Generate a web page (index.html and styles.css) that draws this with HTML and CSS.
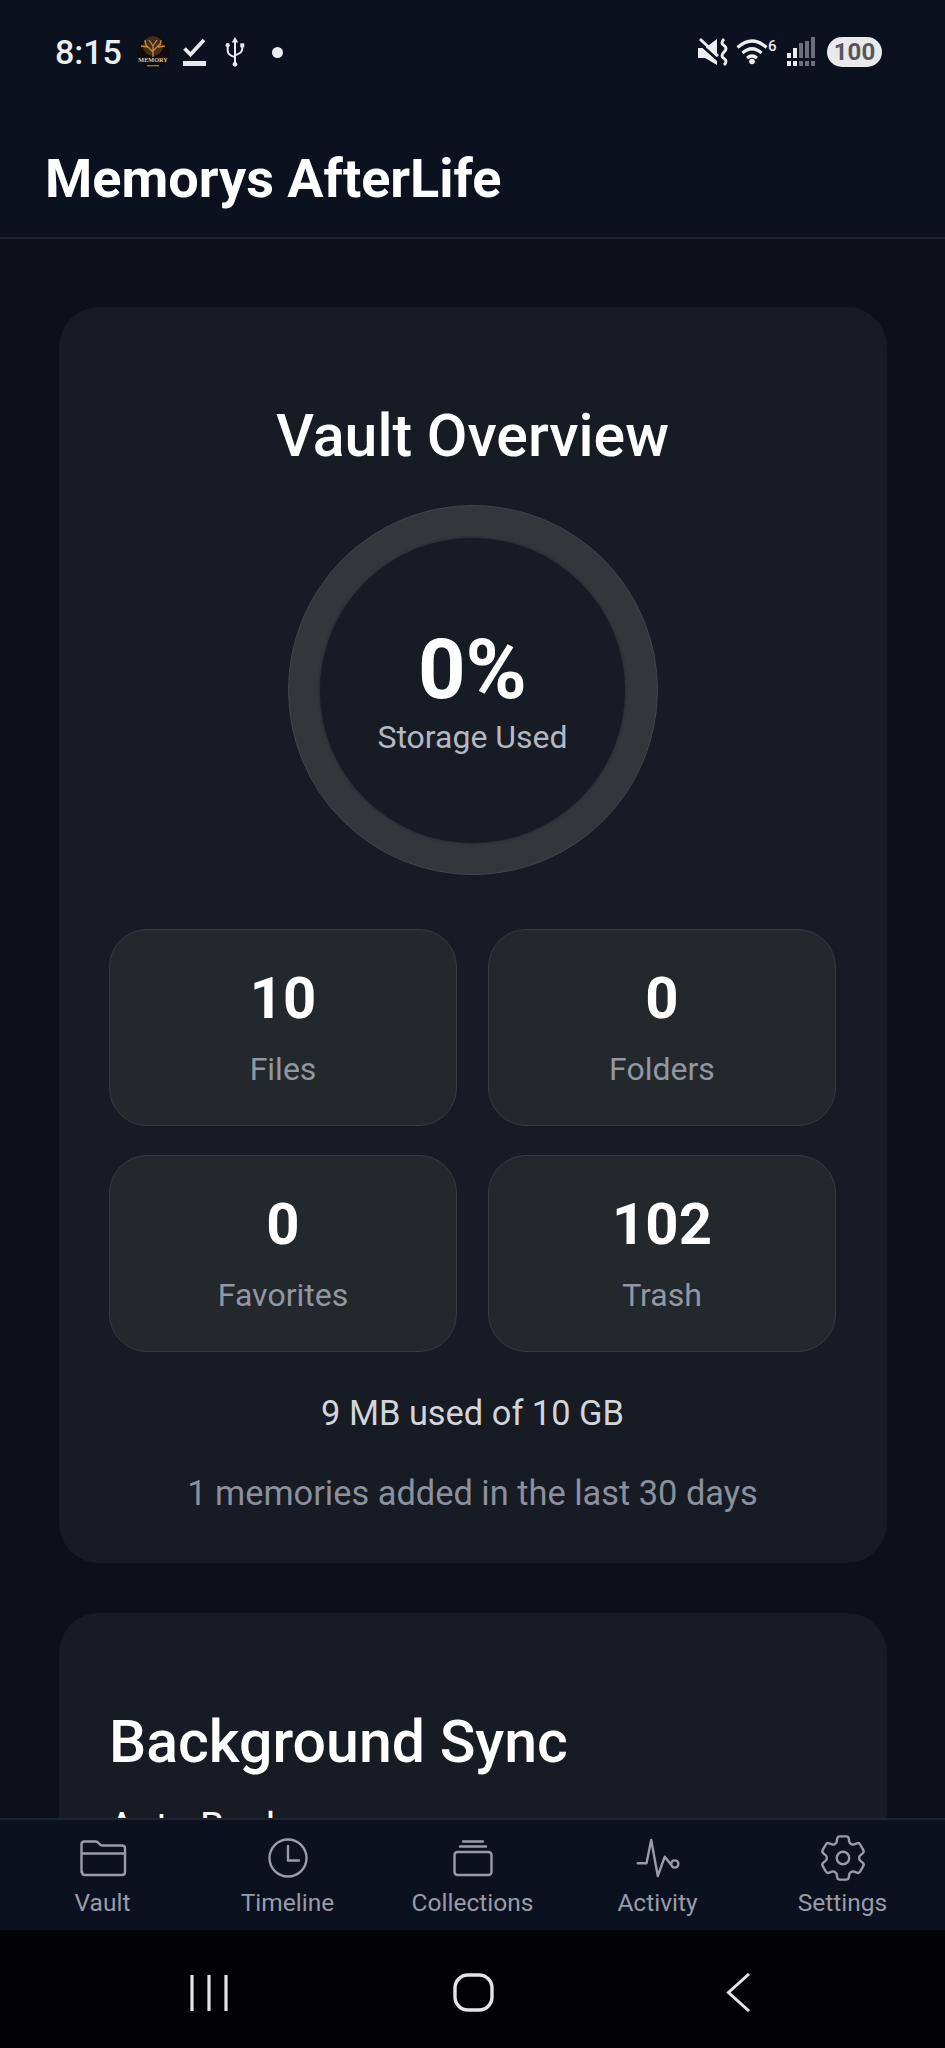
FILE: index.html
```html
<!DOCTYPE html>
<html lang="en">
<head>
<meta charset="utf-8">
<title>Memorys AfterLife</title>
<link rel="stylesheet" href="styles.css">
</head>
<body>
<div class="phone">
  <header class="top">
    <div class="status">
      <div class="status-left">
        <span class="time">8:15</span>
        <svg class="logo" width="32" height="34" viewBox="0 0 32 34">
          <circle cx="16" cy="17" r="16" fill="#120c08"/>
          <circle cx="16" cy="11" r="10" fill="#6d4a22" opacity=".55"/>
          <path d="M16 22V11M16 17l-7-7M16 16l7-7M11 12l-7-1M21 12l7-1M16 11l-4-6M16 11l4-6M9 10l-1-5M23 10l1-5" stroke="#c08a45" stroke-width="1.3" fill="none"/>
          <text x="16" y="27" class="logo-text" text-anchor="middle">MEMORY</text>
          <rect x="10" y="30" width="12" height="1.4" fill="#8a7350"/>
        </svg>
        <svg class="check" width="23" height="28" viewBox="0 0 23 28">
          <path d="M1.5 10.5l6 6L21 2" fill="none" stroke="#e8e9ee" stroke-width="3.8"/>
          <rect x="0" y="23" width="23" height="5" fill="#e8e9ee"/>
        </svg>
        <svg class="usb" width="20" height="30" viewBox="0 0 22 33">
          <path d="M11 3v27M3 10v5q0 5 8 7M19 10v3q0 5-8 7" fill="none" stroke="#e8e9ee" stroke-width="2.2"/>
          <path d="M11 0l3.6 6H7.4z" fill="#e8e9ee"/>
          <circle cx="3" cy="9" r="2.3" fill="#e8e9ee"/>
          <rect x="16.8" y="7" width="4.4" height="4.4" fill="#e8e9ee"/>
          <circle cx="11" cy="30" r="2.6" fill="#e8e9ee"/>
        </svg>
        <span class="dot"></span>
      </div>
      <div class="status-right">
        <svg class="mute" width="30" height="30" viewBox="0 0 30 30">
          <path d="M0 11h7L19 2v26L7 21H0z" fill="#eceef2"/>
          <path d="M1 6l19 17" stroke="#0c1120" stroke-width="3"/>
          <path d="M2 2l18 17" stroke="#eceef2" stroke-width="3"/>
          <path d="M26 2q-4 4 0 6.5t0 6.5 0 6.5 0 6.5" fill="none" stroke="#eceef2" stroke-width="3"/>
        </svg>
        <div class="wifi">
          <svg width="32" height="30" viewBox="0 0 32 30">
            <path d="M1.500 10.500q14.500-13 29 0M6.500 16q9.500-8.500 19 0M11 21q5-4 10 0" fill="none" stroke="#eceef2" stroke-width="3.2"/>
            <circle cx="16" cy="24.500" r="2.800" fill="#eceef2"/>
          </svg>
          <span class="wifi-num">6</span>
        </div>
        <svg class="signal" width="28" height="30" viewBox="0 0 28 30">
          <g fill="#eceef2"><rect x="0" y="16" width="4" height="5"/><rect x="0" y="24" width="4" height="5"/><rect x="6" y="11" width="4" height="10"/><rect x="6" y="24" width="4" height="5"/></g>
          <g fill="#6b6e7b"><rect x="12" y="6" width="4" height="15"/><rect x="12" y="24" width="4" height="5"/><rect x="18" y="4" width="4" height="17"/><rect x="18" y="24" width="4" height="5"/><rect x="24" y="0" width="4" height="21"/><rect x="24" y="24" width="4" height="5"/></g>
        </svg>
        <span class="battery">100</span>
      </div>
    </div>
    <h1 class="app-title">Memorys AfterLife</h1>
  </header>

  <main class="content">
    <section class="card overview">
      <h2 class="overview-title">Vault Overview</h2>
      <div class="ring">
        <div class="ring-inner">
          <div class="ring-value">0%</div>
          <div class="ring-label">Storage Used</div>
        </div>
      </div>
      <div class="stats">
        <div class="stat"><div class="stat-value">10</div><div class="stat-label">Files</div></div>
        <div class="stat"><div class="stat-value">0</div><div class="stat-label">Folders</div></div>
        <div class="stat"><div class="stat-value">0</div><div class="stat-label">Favorites</div></div>
        <div class="stat"><div class="stat-value">102</div><div class="stat-label">Trash</div></div>
      </div>
      <p class="used">9 MB used of 10 GB</p>
      <p class="recent">1 memories added in the last 30 days</p>
    </section>
    <section class="card sync">
      <h2 class="sync-title">Background Sync</h2>
      <div class="sync-row">Auto Backup</div>
    </section>
  </main>

  <nav class="tabs">
    <div class="tab">
      <svg class="tab-icon" viewBox="0 0 48 48"><path d="M2.500 38V10.500q0-3 3-3h11q2 0 3 1.500l1 1q1 1.500 3 1.500h19.500q3 0 3 3V38q0 3-3 3h-37q-3 0-3-3zM2.500 19.500h43"/></svg>
      <span>Vault</span>
    </div>
    <div class="tab">
      <svg class="tab-icon" viewBox="0 0 48 48"><circle cx="24" cy="24" r="18.500"/><path d="M24 12v14.500h11"/></svg>
      <span>Timeline</span>
    </div>
    <div class="tab">
      <svg class="tab-icon" viewBox="0 0 48 48"><rect x="5.500" y="18" width="37" height="23" rx="3"/><path d="M14 7.500h20M11 12.500h26"/></svg>
      <span>Collections</span>
    </div>
    <div class="tab">
      <svg class="tab-icon" viewBox="0 0 48 48"><path d="M3.800 29.300h8.700L17.200 6l6.600 36 7-19.300L36.500 30"/><circle cx="40.800" cy="30" r="3.600"/></svg>
      <span>Activity</span>
    </div>
    <div class="tab">
      <svg class="tab-icon gear" viewBox="2 2 20 20"><path d="M9.594 3.940c.09-.542.56-.94 1.110-.94h2.593c.55 0 1.020.398 1.110.94l.213 1.281c.063.374.313.686.645.870.074.04.147.083.22.127.325.196.72.257 1.075.124l1.217-.456a1.125 1.125 0 0 1 1.370.49l1.296 2.247a1.125 1.125 0 0 1-.26 1.431l-1.003.827c-.293.241-.438.613-.43.992a7.723 7.723 0 0 1 0 .255c-.008.378.137.75.43.991l1.004.827c.424.35.534.955.26 1.430l-1.298 2.247a1.125 1.125 0 0 1-1.369.491l-1.217-.456c-.355-.133-.75-.072-1.076.124a6.470 6.470 0 0 1-.22.128c-.331.183-.581.495-.644.869l-.213 1.281c-.09.543-.56.94-1.110.94h-2.594c-.55 0-1.019-.398-1.110-.94l-.213-1.281c-.062-.374-.312-.686-.644-.87a6.520 6.520 0 0 1-.22-.127c-.325-.196-.72-.257-1.076-.124l-1.217.456a1.125 1.125 0 0 1-1.369-.49l-1.297-2.247a1.125 1.125 0 0 1 .26-1.431l1.004-.827c.292-.24.437-.613.43-.991a6.932 6.932 0 0 1 0-.255c.007-.38-.138-.751-.43-.992l-1.004-.827a1.125 1.125 0 0 1-.26-1.430l1.297-2.247a1.125 1.125 0 0 1 1.370-.491l1.216.456c.356.133.751.072 1.076-.124.072-.044.146-.086.22-.128.332-.183.582-.495.644-.869l.214-1.280z"/><circle cx="12" cy="12" r="2.600"/></svg>
      <span>Settings</span>
    </div>
  </nav>

  <footer class="sysnav">
    <svg width="40" height="36" viewBox="0 0 40 36"><path d="M3 0v36M20 0v36M37 0v36" stroke="#e4e4e4" stroke-width="3.200" fill="none"/></svg>
    <svg width="41" height="39" viewBox="0 0 41 39"><rect x="2" y="2" width="37" height="35" rx="13" fill="none" stroke="#e4e4e4" stroke-width="3.400"/></svg>
    <svg width="24" height="39" viewBox="0 0 24 39"><path d="M23 1L2.500 19.500 23 38" fill="none" stroke="#e4e4e4" stroke-width="3"/></svg>
  </footer>
</div>
</body>
</html>
```

FILE: styles.css
```css
* { box-sizing: border-box; }
html, body { margin: 0; padding: 0; background: #0d1117; }
body { font-family: Roboto, "Noto Sans", sans-serif; color: #fff; }

.phone {
  width: 945px;
  height: 2048px;
  display: flex;
  flex-direction: column;
  overflow: hidden;
}

.top {
  height: 239px;
  flex: none;
  background: #0c1120;
  border-bottom: 2px solid #1c212d;
  padding: 33px 0 0;
}
.status {
  height: 38px;
  display: flex;
  justify-content: space-between;
  align-items: center;
  padding: 0 63px 0 55px;
}
.status-left, .status-right { display: flex; align-items: center; }
.time { width: 66px; font-size: 34px; font-weight: 500; color: #eceef2; white-space: nowrap; margin-right: 16px; }
.logo { margin-right: 14px; }
.logo-text { font: 700 6.2px "Liberation Serif", serif; fill: #d9cbb0; }
.check { margin-right: 19px; }
.usb { margin-right: 27px; }
.dot { width: 11px; height: 11px; border-radius: 50%; background: #eceef2; }
.mute { margin-right: 8px; }
.wifi { display: flex; align-items: flex-start; margin-right: 9px; }
.signal { margin-right: 12px; }
.wifi-num { width: 10px; font-size: 15px; line-height: 18px; font-weight: 500; color: #eceef2; }
.battery {
  width: 55px;
  height: 30px;
  border-radius: 15px;
  background: #e9e9ec;
  color: #55565c;
  font-size: 24px;
  font-weight: 700;
  text-align: center;
  line-height: 30px;
}
.app-title {
  margin: 79px 0 0 45px;
  font-size: 54px;
  line-height: 58px;
  font-weight: 700;
}

.content {
  flex: 1;
  min-height: 0;
  overflow: hidden;
  padding: 68px 58px 0 59px;
  display: flex;
  flex-direction: column;
  gap: 50px;
}
.card {
  background: #161b24;
  border-radius: 40px;
  flex: none;
}
.overview {
  height: 1256px;
  padding: 95px 51px 0 50px;
  display: flex;
  flex-direction: column;
  align-items: center;
}
.overview-title {
  margin: 0;
  font-size: 59px;
  line-height: 68px;
  font-weight: 500;
}
.ring {
  width: 370px;
  height: 370px;
  margin-top: 35px;
  border-radius: 50%;
  background: #32373c;
  border: 1px solid #40454b;
  display: flex;
  align-items: center;
  justify-content: center;
}
.ring-inner {
  width: 305px;
  height: 305px;
  padding-top: 5px;
  border-radius: 50%;
  background: #161b24;
  box-shadow: 0 0 3px rgba(22, 27, 36, .8);
  display: flex;
  flex-direction: column;
  align-items: center;
  justify-content: center;
}
.ring-value { font-size: 83px; line-height: 84px; font-weight: 700; }
.ring-label { font-size: 32px; line-height: 40px; color: #b4b8c0; margin-top: 5px; }
.stats {
  width: 100%;
  margin-top: 54px;
  display: grid;
  grid-template-columns: 1fr 1fr;
  gap: 29px 31px;
}
.stat {
  height: 197px;
  background: #23282d;
  border: 1px solid #363b42;
  border-radius: 38px;
  text-align: center;
  padding-top: 35px;
}
.stat-value { font-size: 58px; line-height: 66px; font-weight: 700; }
.stat-label { font-size: 32px; line-height: 40px; color: #9197a3; margin-top: 18px; }
.used { margin: 41px 0 0; font-size: 34.4px; line-height: 40px; color: #d2d5da; }
.recent { margin: 40px 0 0; font-size: 34.4px; line-height: 40px; color: #8b909c; }

.sync { height: 400px; padding: 96px 50px 0; }
.sync-title { margin: 0; font-size: 59px; line-height: 66px; font-weight: 500; }
.sync-row { margin-top: 28px; font-size: 39px; line-height: 48px; font-weight: 400; }

.tabs {
  height: 112px;
  flex: none;
  background: #0c1120;
  border-top: 2px solid #1e2430;
  display: grid;
  grid-template-columns: repeat(5, 185px);
  padding: 14px 10px 0;
}
.tab {
  display: flex;
  flex-direction: column;
  align-items: center;
  font-size: 24.5px;
  line-height: 30px;
  color: #989ca8;
}
.tab span { margin-top: 6px; }
.tab-icon {
  width: 48px;
  height: 48px;
  fill: none;
  stroke: #989ca8;
  stroke-width: 2.4;
  stroke-linejoin: round;
  stroke-linecap: round;
}
.tab-icon.gear { stroke-width: 1; }

.sysnav {
  height: 118px;
  flex: none;
  background: #020204;
  display: grid;
  grid-template-columns: repeat(3, 264.5px);
  padding: 7px 0 0 77px;
  justify-items: center;
  align-items: center;
}
```
